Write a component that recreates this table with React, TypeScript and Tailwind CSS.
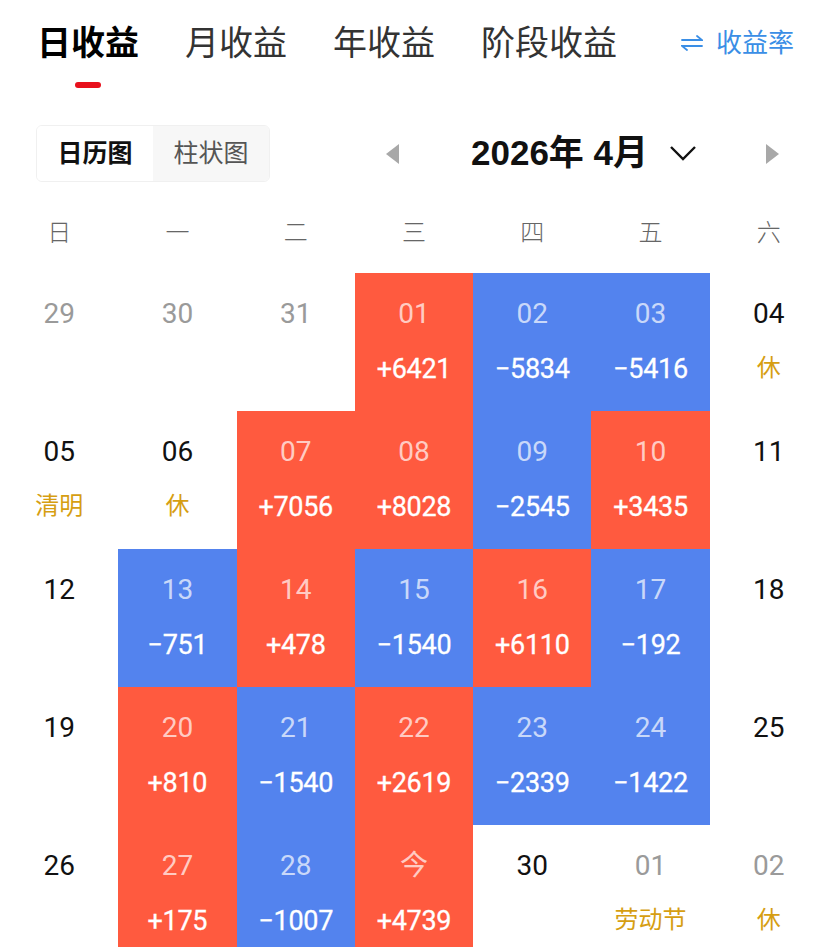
import { useState } from "react";

type Day = {
  d: string;
  v?: string;
  kind?: "up" | "down";
  muted?: boolean;
  tag?: string;
};

const weeks: Day[][] = [
  [
    { d: "29", muted: true },
    { d: "30", muted: true },
    { d: "31", muted: true },
    { d: "01", v: "+6421", kind: "up" },
    { d: "02", v: "−5834", kind: "down" },
    { d: "03", v: "−5416", kind: "down" },
    { d: "04", tag: "休" },
  ],
  [
    { d: "05", tag: "清明" },
    { d: "06", tag: "休" },
    { d: "07", v: "+7056", kind: "up" },
    { d: "08", v: "+8028", kind: "up" },
    { d: "09", v: "−2545", kind: "down" },
    { d: "10", v: "+3435", kind: "up" },
    { d: "11" },
  ],
  [
    { d: "12" },
    { d: "13", v: "−751", kind: "down" },
    { d: "14", v: "+478", kind: "up" },
    { d: "15", v: "−1540", kind: "down" },
    { d: "16", v: "+6110", kind: "up" },
    { d: "17", v: "−192", kind: "down" },
    { d: "18" },
  ],
  [
    { d: "19" },
    { d: "20", v: "+810", kind: "up" },
    { d: "21", v: "−1540", kind: "down" },
    { d: "22", v: "+2619", kind: "up" },
    { d: "23", v: "−2339", kind: "down" },
    { d: "24", v: "−1422", kind: "down" },
    { d: "25" },
  ],
  [
    { d: "26" },
    { d: "27", v: "+175", kind: "up" },
    { d: "28", v: "−1007", kind: "down" },
    { d: "今", v: "+4739", kind: "up" },
    { d: "30" },
    { d: "01", muted: true, tag: "劳动节" },
    { d: "02", muted: true, tag: "休" },
  ],
];

const weekdays = ["日", "一", "二", "三", "四", "五", "六"];
const tabs = ["日收益", "月收益", "年收益", "阶段收益"];

const Cell = ({ day }: { day: Day }) => {
  const bg =
    day.kind === "up" ? "bg-[#ff5a3f]" : day.kind === "down" ? "bg-[#5383ee]" : "bg-white";
  const numColor = day.kind
    ? "text-white/70"
    : day.muted
      ? "text-[#9a9a9a]"
      : "text-[#111]";
  return (
    <div className={`h-[138px] flex flex-col items-center pt-[24px] ${bg}`}>
      <div className={`text-[28px] leading-[34px] ${numColor}`}>{day.d}</div>
      {day.v && (
        <div className="mt-[21px] text-[27px] leading-[34px] tracking-[-0.3px] text-white [-webkit-text-stroke:0.3px_white]">
          {day.v}
        </div>
      )}
      {day.tag && (
        <div className="mt-[20px] text-[24px] leading-[34px] text-[#d69e12]">{day.tag}</div>
      )}
    </div>
  );
};

const App = () => {
  const [tab, setTab] = useState(0);
  const [view, setView] = useState(0);

  return (
    <div
      className="w-[828px] h-[947px] overflow-hidden bg-white"
      style={{ fontFamily: 'Roboto, "Noto Sans CJK SC", sans-serif' }}
    >
      {/* top tabs */}
      <div className="flex items-start pt-[22px] pl-[37px] pr-[34px]">
        {tabs.map((t, i) => (
          <button
            key={t}
            onClick={() => setTab(i)}
            className={`flex flex-col items-center ${i > 0 ? "ml-[46px]" : ""}`}
          >
            <span
              className={`text-[34px] leading-[42px] ${
                tab === i ? "font-bold text-black" : "text-[#333]"
              }`}
            >
              {t}
            </span>
            <span
              className={`mt-[18px] h-[6px] w-[26px] rounded-full ${
                tab === i ? "bg-[#e8101c]" : "bg-transparent"
              }`}
            />
          </button>
        ))}
        <div className="ml-auto flex items-center h-[42px] text-[#3a8ee6]">
          <svg width="22" height="16" viewBox="0 0 22 16" fill="none" stroke="currentColor" strokeWidth="1.8" strokeLinecap="round">
            <path d="M1 5h20l-5-4" />
            <path d="M21 11H1l5 4" />
          </svg>
          <span className="ml-[13px] text-[26px]">收益率</span>
        </div>
      </div>

      {/* view switch + month */}
      <div className="flex items-center mt-[37px] pl-[36px]">
        <div className="flex h-[57px] w-[234px] rounded-[6px] border border-[#f0f0f0] overflow-hidden">
          {["日历图", "柱状图"].map((t, i) => (
            <button
              key={t}
              onClick={() => setView(i)}
              className={`w-[117px] text-[25px] ${
                view === i ? "bg-white font-bold text-[#111]" : "bg-[#f7f7f7] text-[#555]"
              }`}
            >
              {t}
            </button>
          ))}
        </div>
        <svg className="ml-[116px]" width="13" height="20" viewBox="0 0 13 20">
          <path d="M13 0v20L0 10z" fill="#a8a8a8" />
        </svg>
        <div className="ml-[72px] text-[35px] font-bold text-[#111]" style={{ fontFamily: '"Liberation Sans", "Noto Sans CJK SC", sans-serif' }}>
          2026年 4月
        </div>
        <svg className="ml-[22px]" width="26" height="15" viewBox="0 0 26 15" fill="none" stroke="#111" strokeWidth="2.4">
          <path d="M1 1l12 12L25 1" />
        </svg>
        <svg className="ml-[70px]" width="13" height="20" viewBox="0 0 13 20">
          <path d="M0 0v20l13-10z" fill="#a8a8a8" />
        </svg>
      </div>

      {/* weekdays */}
      <div className="grid grid-cols-7 mt-[31px] h-[40px] items-center">
        {weekdays.map((w) => (
          <div key={w} className="text-center text-[24px] font-light text-[#666]">
            {w}
          </div>
        ))}
      </div>

      {/* calendar */}
      <div className="grid grid-cols-7 mt-[20px]">
        {weeks.flat().map((day, i) => (
          <Cell key={i} day={day} />
        ))}
      </div>
    </div>
  );
};

export default App;
